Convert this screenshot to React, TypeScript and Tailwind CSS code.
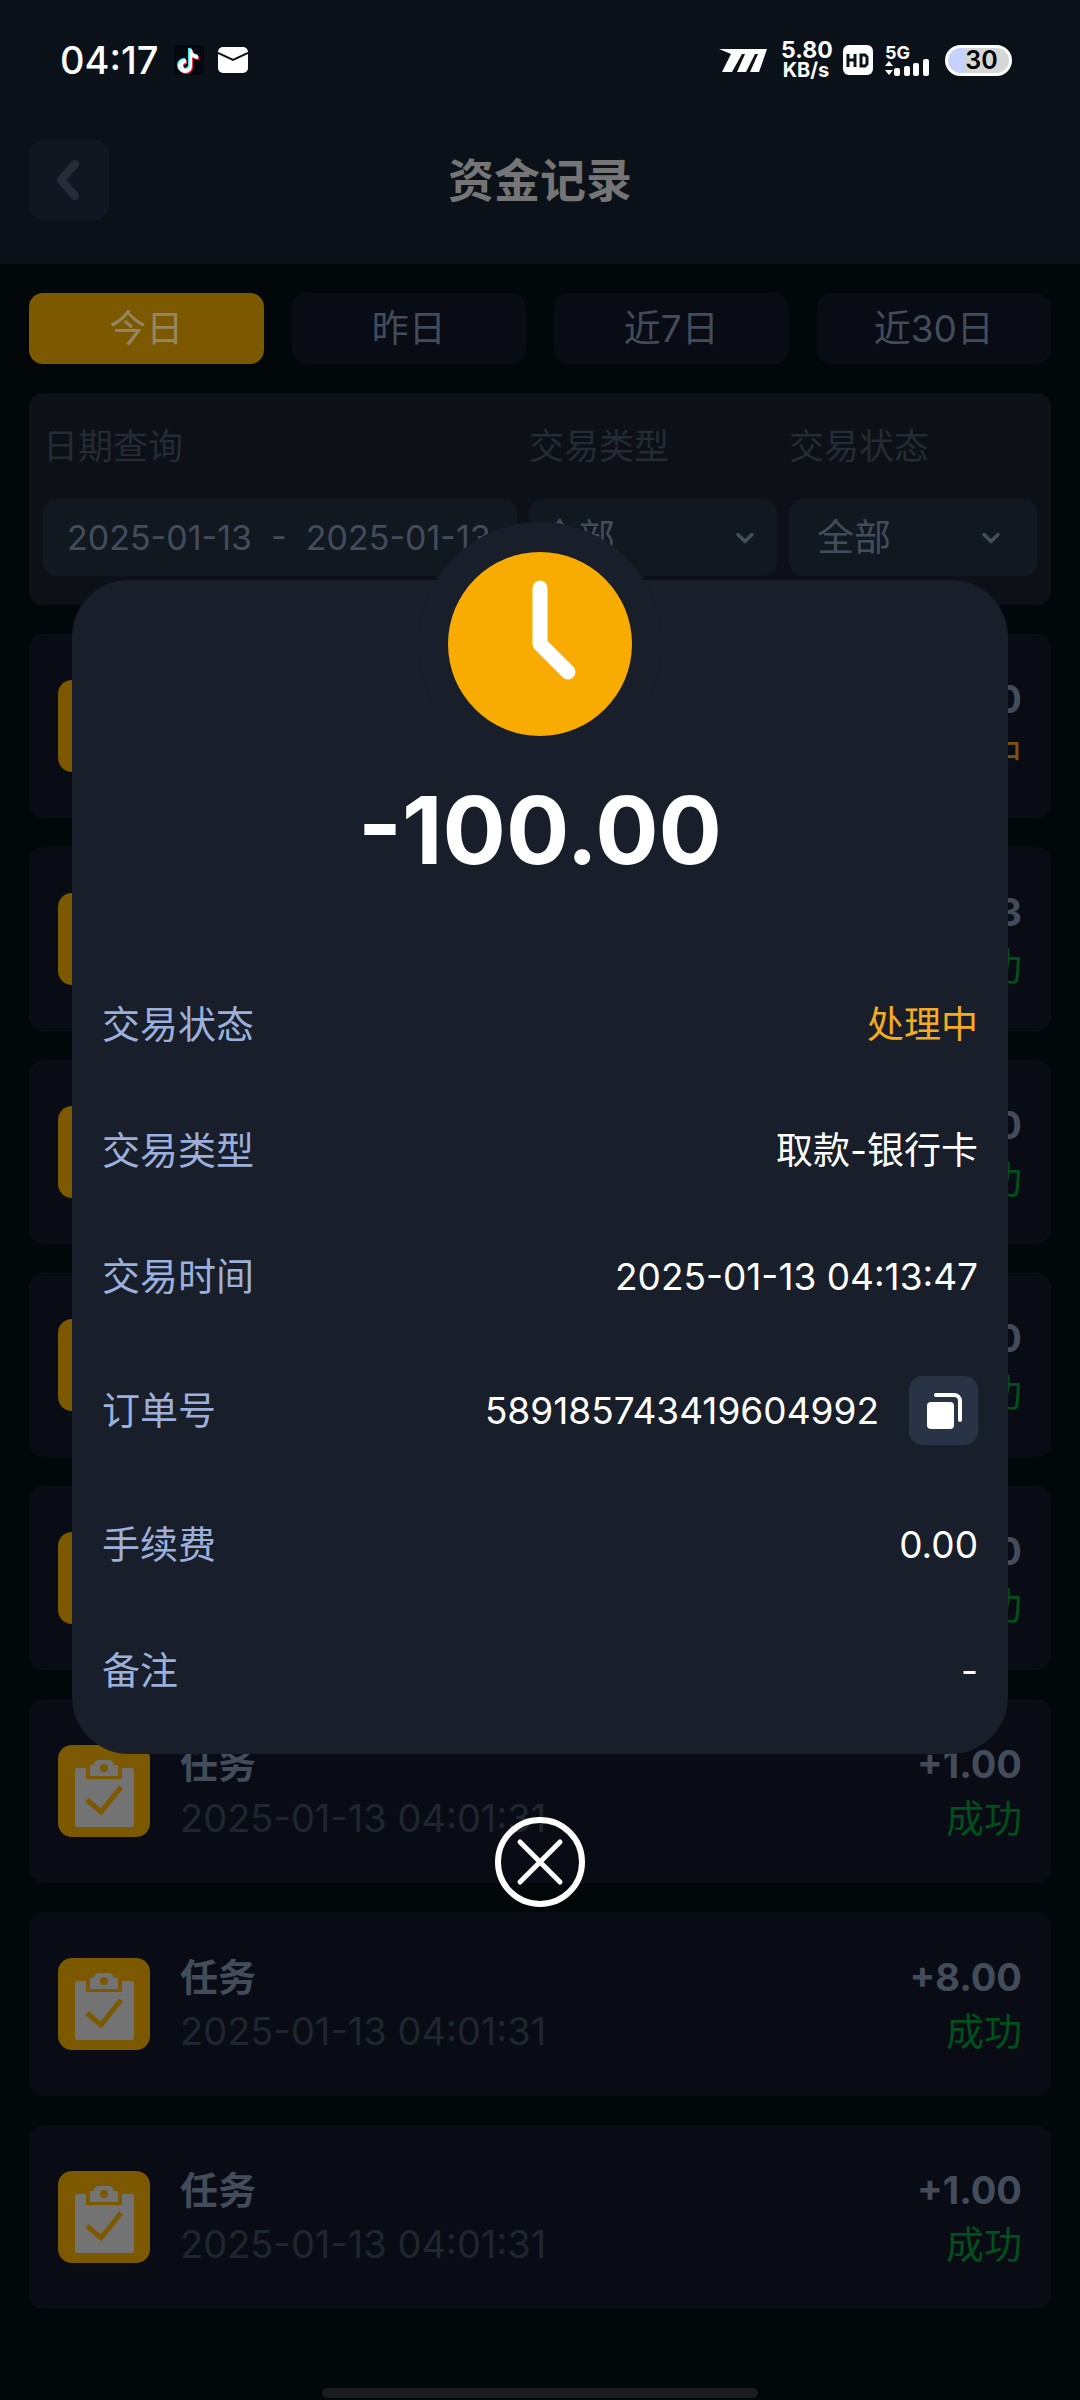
import { ChevronDown } from 'lucide-react';

const ranges = ['今日', '昨日', '近7日', '近30日'];

const records = [
  { title: '取款-银行卡', time: '2025-01-13 04:13:47', amount: '-100.00', status: '处理中' },
  { title: '任务', time: '2025-01-13 04:01:31', amount: '+3.83', status: '成功' },
  { title: '存款', time: '2025-01-13 04:01:31', amount: '+100.00', status: '成功' },
  { title: '任务', time: '2025-01-13 04:01:31', amount: '+1.00', status: '成功' },
  { title: '任务', time: '2025-01-13 04:01:31', amount: '+1.00', status: '成功' },
  { title: '任务', time: '2025-01-13 04:01:31', amount: '+1.00', status: '成功' },
  { title: '任务', time: '2025-01-13 04:01:31', amount: '+8.00', status: '成功' },
  { title: '任务', time: '2025-01-13 04:01:31', amount: '+1.00', status: '成功' },
];

const details = [
  { label: '交易状态', value: '处理中', accent: true },
  { label: '交易类型', value: '取款-银行卡' },
  { label: '交易时间', value: '2025-01-13 04:13:47' },
  { label: '订单号', value: '589185743419604992', copy: true },
  { label: '手续费', value: '0.00' },
  { label: '备注', value: '-' },
];

const tiktokNote = 'M15 4h3c0 4 3 6 6 6v4c-2 0-4-1-6-2v9a7 7 0 1 1-7-7h1v4h-1a3 3 0 1 0 4 3z';

const StatusBar = () => (
  <div className="h-[120px] pl-[60px] pr-[68px] flex items-center justify-between text-white">
    <div className="flex items-center">
      <span className="text-[38px] leading-[40px] font-medium">04:17</span>
      <svg className="ml-4 w-[30px] h-[30px]" viewBox="0 0 30 30">
        <rect width="30" height="30" rx="3" fill="#07070f" />
        <path d={tiktokNote} fill="#25f4ee" transform="translate(-1 -1)" />
        <path d={tiktokNote} fill="#fe2c55" transform="translate(1 1)" />
        <path d={tiktokNote} fill="#fff" />
      </svg>
      <svg className="ml-[14px] w-[30px] h-[26px]" viewBox="0 0 30 26">
        <rect width="30" height="26" rx="5" fill="#fff" />
        <path d="M0 6l15 7 15-7" fill="none" stroke="#0b1118" strokeWidth="2" />
      </svg>
    </div>

    <div className="flex items-center">
      <svg className="w-[48px] h-[23px]" viewBox="0 0 48 23" fill="#fff">
        <path d="M0 0h48l-8 23h-9l8-18h-3l-9 18h-9l8-18h-3l-10 18H3L12 5z" />
      </svg>
      <div className="ml-[14px] w-[50px] text-center text-[23px] leading-[20px] font-bold">
        <div>5.80</div>
        <div className="text-[20px]">KB/s</div>
      </div>
      <svg className="ml-[12px] w-[30px] h-[30px]" viewBox="0 0 30 30">
        <rect width="30" height="30" rx="6" fill="#fff" />
        <path d="M5 9v13M12 9v13M5 15h7M18 10h4l2 2v7l-2 2h-4z" fill="none" stroke="#0b1118" strokeWidth="3" />
      </svg>
      <div className="ml-[12px] relative w-[44px] h-[31px]">
        <span className="absolute left-0 top-0 text-[18px] leading-[16px] font-bold">5G</span>
        <svg className="w-[44px] h-[31px]" viewBox="0 0 44 31" fill="#fff">
          <path d="M0 21l4-5 4 5zM0 25h8l-4 5z" />
          <rect x="9" y="23" width="6" height="8" rx="2" />
          <rect x="19" y="21" width="6" height="10" rx="2" />
          <rect x="28" y="18" width="6" height="13" rx="2" />
          <rect x="38" y="14" width="6" height="17" rx="2" />
        </svg>
      </div>
      <div className="ml-4 w-[67px] h-[31px] rounded-full border-3 border-white bg-linear-to-r from-[#c5d2fb] from-30% to-[#d6d6d6] to-30% flex items-center justify-center pl-[6px] text-[25px] leading-[25px] font-semibold text-black">
        30
      </div>
    </div>
  </div>
);

const ClipboardIcon = () => (
  <svg className="w-[92px] h-[92px] shrink-0" viewBox="0 0 92 92">
    <rect width="92" height="92" rx="14" fill="#7c5800" />
    <rect x="17" y="23" width="59" height="59" rx="2" fill="#737373" />
    <path d="M28 23h36v11H28z" fill="#7c5800" />
    <path d="M32 20h4c0-3 2-5 5-5h10c3 0 4 2 5 5h4v11H32z" fill="#737373" />
    <circle cx="46" cy="23" r="4" fill="#7c5800" />
    <path d="M29 55l14 12 20-25" fill="none" stroke="#7c5800" strokeWidth="5" />
  </svg>
);

type SelectProps = { label: string; selectClass: string; iconClass: string };

const Select = ({ label, selectClass, iconClass }: SelectProps) => (
  <label className="flex flex-col text-[35px] leading-[50px] text-[#252b33]">
    {label}
    <span className="mt-7 grid items-center">
      <select className={`col-start-1 row-start-1 h-[77px] w-full appearance-none rounded-[14px] bg-[#111820] text-[37px] text-[#434c5b] ${selectClass}`}>
        <option>全部</option>
      </select>
      <ChevronDown
        strokeWidth={3}
        className={`col-start-1 row-start-1 justify-self-end size-7 text-[#434c5b] pointer-events-none ${iconClass}`}
      />
    </span>
  </label>
);

const DetailModal = () => (
  <div className="absolute inset-0 pt-[580px] px-[72px] flex flex-col items-center">
    <div role="dialog" aria-label="交易详情" className="relative w-full rounded-[57px] bg-[#181f2a] px-[30px] pb-[57px]">
      <div className="absolute -top-[58px] left-1/2 -translate-x-1/2 size-[244px] rounded-full bg-[#181f2a] p-[30px]">
        <svg className="size-[184px]" viewBox="0 0 184 184">
          <circle cx="92" cy="92" r="92" fill="#f8ab00" />
          <path d="M92 36v56l28 28" fill="none" stroke="#fff" strokeWidth="15" strokeLinecap="round" strokeLinejoin="round" />
        </svg>
      </div>

      <p className="relative pt-[190px] text-center text-[94px] leading-[120px] font-bold text-white">-100.00</p>

      <dl className="mt-[108px] flex flex-col gap-[73px] text-[37px] leading-[53px]">
        {details.map((item) => (
          <div key={item.label} className="flex items-center justify-between">
            <dt className="text-[38px] text-[#9cb0db]">{item.label}</dt>
            <dd className={item.accent ? 'text-[#f4ab22]' : 'flex items-center gap-[30px] text-white'}>
              {item.value}
              {item.copy && (
                <button aria-label="复制" className="size-[69px] rounded-[14px] bg-[#283345] flex items-center justify-center">
                  <svg className="size-[36px]" viewBox="0 0 36 36">
                    <rect x="1" y="9" width="27" height="27" rx="4" fill="#fff" />
                    <path d="M10 2h18a6 6 0 0 1 6 6v19" fill="none" stroke="#fff" strokeWidth="4" strokeLinecap="round" />
                  </svg>
                </button>
              )}
            </dd>
          </div>
        ))}
      </dl>
    </div>

    <button aria-label="关闭" className="mt-[62px]">
      <svg className="size-[92px]" viewBox="0 0 92 92" fill="none" stroke="#fff" strokeLinecap="round">
        <circle cx="46" cy="46" r="42" strokeWidth="6" />
        <path d="M26 26l40 40M66 26L26 66" strokeWidth="5" />
      </svg>
    </button>
  </div>
);

const App = () => (
  <div className="relative min-h-screen overflow-hidden flex flex-col bg-[#020709] font-['Inter','Noto_Sans_CJK_SC',sans-serif]">
    <header className="bg-[#0b1118] pb-11">
      <StatusBar />
      <div className="mt-5 px-[29px] grid grid-cols-[80px_1fr_80px] items-center">
        <button aria-label="返回" className="size-20 rounded-[14px] bg-[#111720] flex items-center justify-center">
          <svg className="w-[24px] h-[42px]" viewBox="0 0 24 42">
            <path d="M18 5L4 21l14 16" fill="none" stroke="#262c38" strokeWidth="8" strokeLinecap="round" strokeLinejoin="round" />
          </svg>
        </button>
        <h1 className="text-center text-[46px] leading-[60px] font-bold text-[#757575]">资金记录</h1>
      </div>
    </header>

    <main className="px-[29px] pt-[29px] flex flex-col gap-[29px]">
      <div className="grid grid-cols-4 gap-7 text-[37px]">
        {ranges.map((range, index) => (
          <button
            key={range}
            className={`h-[71px] rounded-[14px] ${
              index === 0 ? 'bg-[#7c5800] text-[#968763]' : 'bg-[#090c14] text-[#434c5b]'
            }`}
          >
            {range}
          </button>
        ))}
      </div>

      <form className="h-[212px] px-[14px] pt-7 rounded-[14px] bg-[#0d1016] grid grid-cols-[474fr_248fr_248fr] gap-3">
        <label className="flex flex-col text-[35px] leading-[50px] text-[#252b33]">
          日期查询
          <input
            readOnly
            value="2025-01-13  -  2025-01-13"
            className="mt-7 h-[77px] w-full rounded-[14px] bg-[#111820] pl-6 text-[34px] text-[#434c5b]"
          />
        </label>
        <Select label="交易类型" selectClass="pl-3" iconClass="mr-[18px]" />
        <Select label="交易状态" selectClass="pl-7" iconClass="mr-8" />
      </form>

      <ul className="flex flex-col gap-[29px]">
        {records.map((record, index) => (
          <li key={index} className="h-[184px] px-[29px] rounded-[14px] bg-[#090c14] flex items-center text-[38px] leading-[54px]">
            <ClipboardIcon />
            <div className="ml-[30px] flex-1">
              <p className="font-bold text-[#434c5b]">{record.title}</p>
              <p className="text-[#20262f]">{record.time}</p>
            </div>
            <div className="text-right">
              <p className="font-bold text-[#434c5b]">{record.amount}</p>
              <p className={record.status === '成功' ? 'text-[#00501c]' : 'text-[#7a5511]'}>{record.status}</p>
            </div>
          </li>
        ))}
      </ul>
    </main>

    <div className="mt-auto mb-[2px] mx-auto h-[10px] w-[436px] rounded-full bg-[#1a1d1f]" />

    <DetailModal />
  </div>
);

export default App;
